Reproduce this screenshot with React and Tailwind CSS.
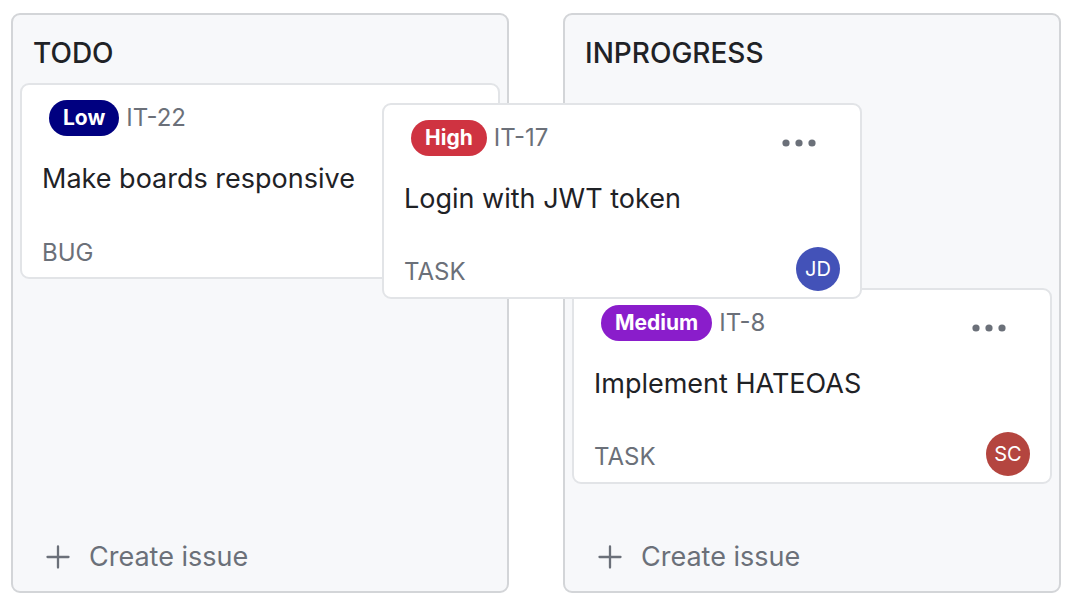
const BADGE = {
  Low: 'bg-[#000080]',
  High: 'bg-[#cf3341]',
  Medium: 'bg-[#8a1dcb]',
}

const Dots = () => (
  <svg width="34" height="8" viewBox="0 0 34 8" className="mt-[10px] text-[#6b7079]" fill="currentColor">
    <circle cx="4" cy="4" r="3.6" />
    <circle cx="17" cy="4" r="3.6" />
    <circle cx="30" cy="4" r="3.6" />
  </svg>
)

const PlusIcon = () => (
  <svg width="24" height="24" viewBox="0 0 24 24" stroke="currentColor" strokeWidth="2.3" strokeLinecap="round">
    <path d="M12 1.5v21M1.5 12h21" />
  </svg>
)

const Avatar = ({ initials, color }) => (
  <div
    className={`w-[44px] h-[44px] rounded-full flex items-center justify-center text-white text-[20px] ${color}`}
  >
    {initials}
  </div>
)

const IssueCard = ({ issue, className = '' }) => (
  <div
    className={`w-[480px] h-[196px] rounded-[9px] border-2 border-[#e2e4e7] bg-white flex flex-col ${className}`}
  >
    <div className="flex items-center pt-[15px] pl-[27px] pr-[44px]">
      <span
        className={`h-[36px] px-[14px] rounded-full flex items-center text-white font-bold text-[21px] ${BADGE[issue.priority]}`}
      >
        {issue.priority}
      </span>
      <span className="ml-[7px] text-[24px] text-[#6b7079]">{issue.key}</span>
      <div className="ml-auto">
        <Dots />
      </div>
    </div>
    <div className="mt-[27px] pl-[20px] text-[27px] leading-[32px] text-[#1f2226]">{issue.title}</div>
    <div className="mt-auto flex items-center justify-between pl-[20px] pr-[20px] pb-[6px]">
      <span className="mt-[6px] text-[24px] text-[#6b7079]">{issue.type}</span>
      {issue.assignee && <Avatar initials={issue.assignee} color={issue.color} />}
    </div>
  </div>
)

const Column = ({ title, children }) => (
  <div className="w-[498px] h-[580px] rounded-[9px] border-2 border-[#d3d5d8] bg-[#f7f8fa] px-[7px] flex flex-col">
    <div className="h-[68px] pt-[23px] pl-[13px] text-[28px] leading-[30px] font-medium text-[#1f2226]">
      {title}
    </div>
    {children}
    <button className="mt-auto mb-[14px] h-[40px] flex items-center pl-[26px] text-[#6b7079]">
      <PlusIcon />
      <span className="ml-[19px] text-[27px]">Create issue</span>
    </button>
  </div>
)

export default function App() {
  return (
    <div className="relative w-[1078px] h-[604px] bg-white font-['Inter',sans-serif]">
      <div className="flex gap-[54px] pl-[11px] pt-[13px]">
        <Column title="TODO">
          <IssueCard
            issue={{ priority: 'Low', key: 'IT-22', title: 'Make boards responsive', type: 'BUG' }}
          />
        </Column>
        <Column title="INPROGRESS">
          <div className="h-[196px] mb-[9px]" />
          <IssueCard
            issue={{
              priority: 'Medium',
              key: 'IT-8',
              title: 'Implement HATEOAS',
              type: 'TASK',
              assignee: 'SC',
              color: 'bg-[#b4453f]',
            }}
          />
        </Column>
      </div>
      {/* card being dragged */}
      <IssueCard
        className="absolute left-[382px] top-[103px]"
        issue={{
          priority: 'High',
          key: 'IT-17',
          title: 'Login with JWT token',
          type: 'TASK',
          assignee: 'JD',
          color: 'bg-[#4352b8]',
        }}
      />
    </div>
  )
}
